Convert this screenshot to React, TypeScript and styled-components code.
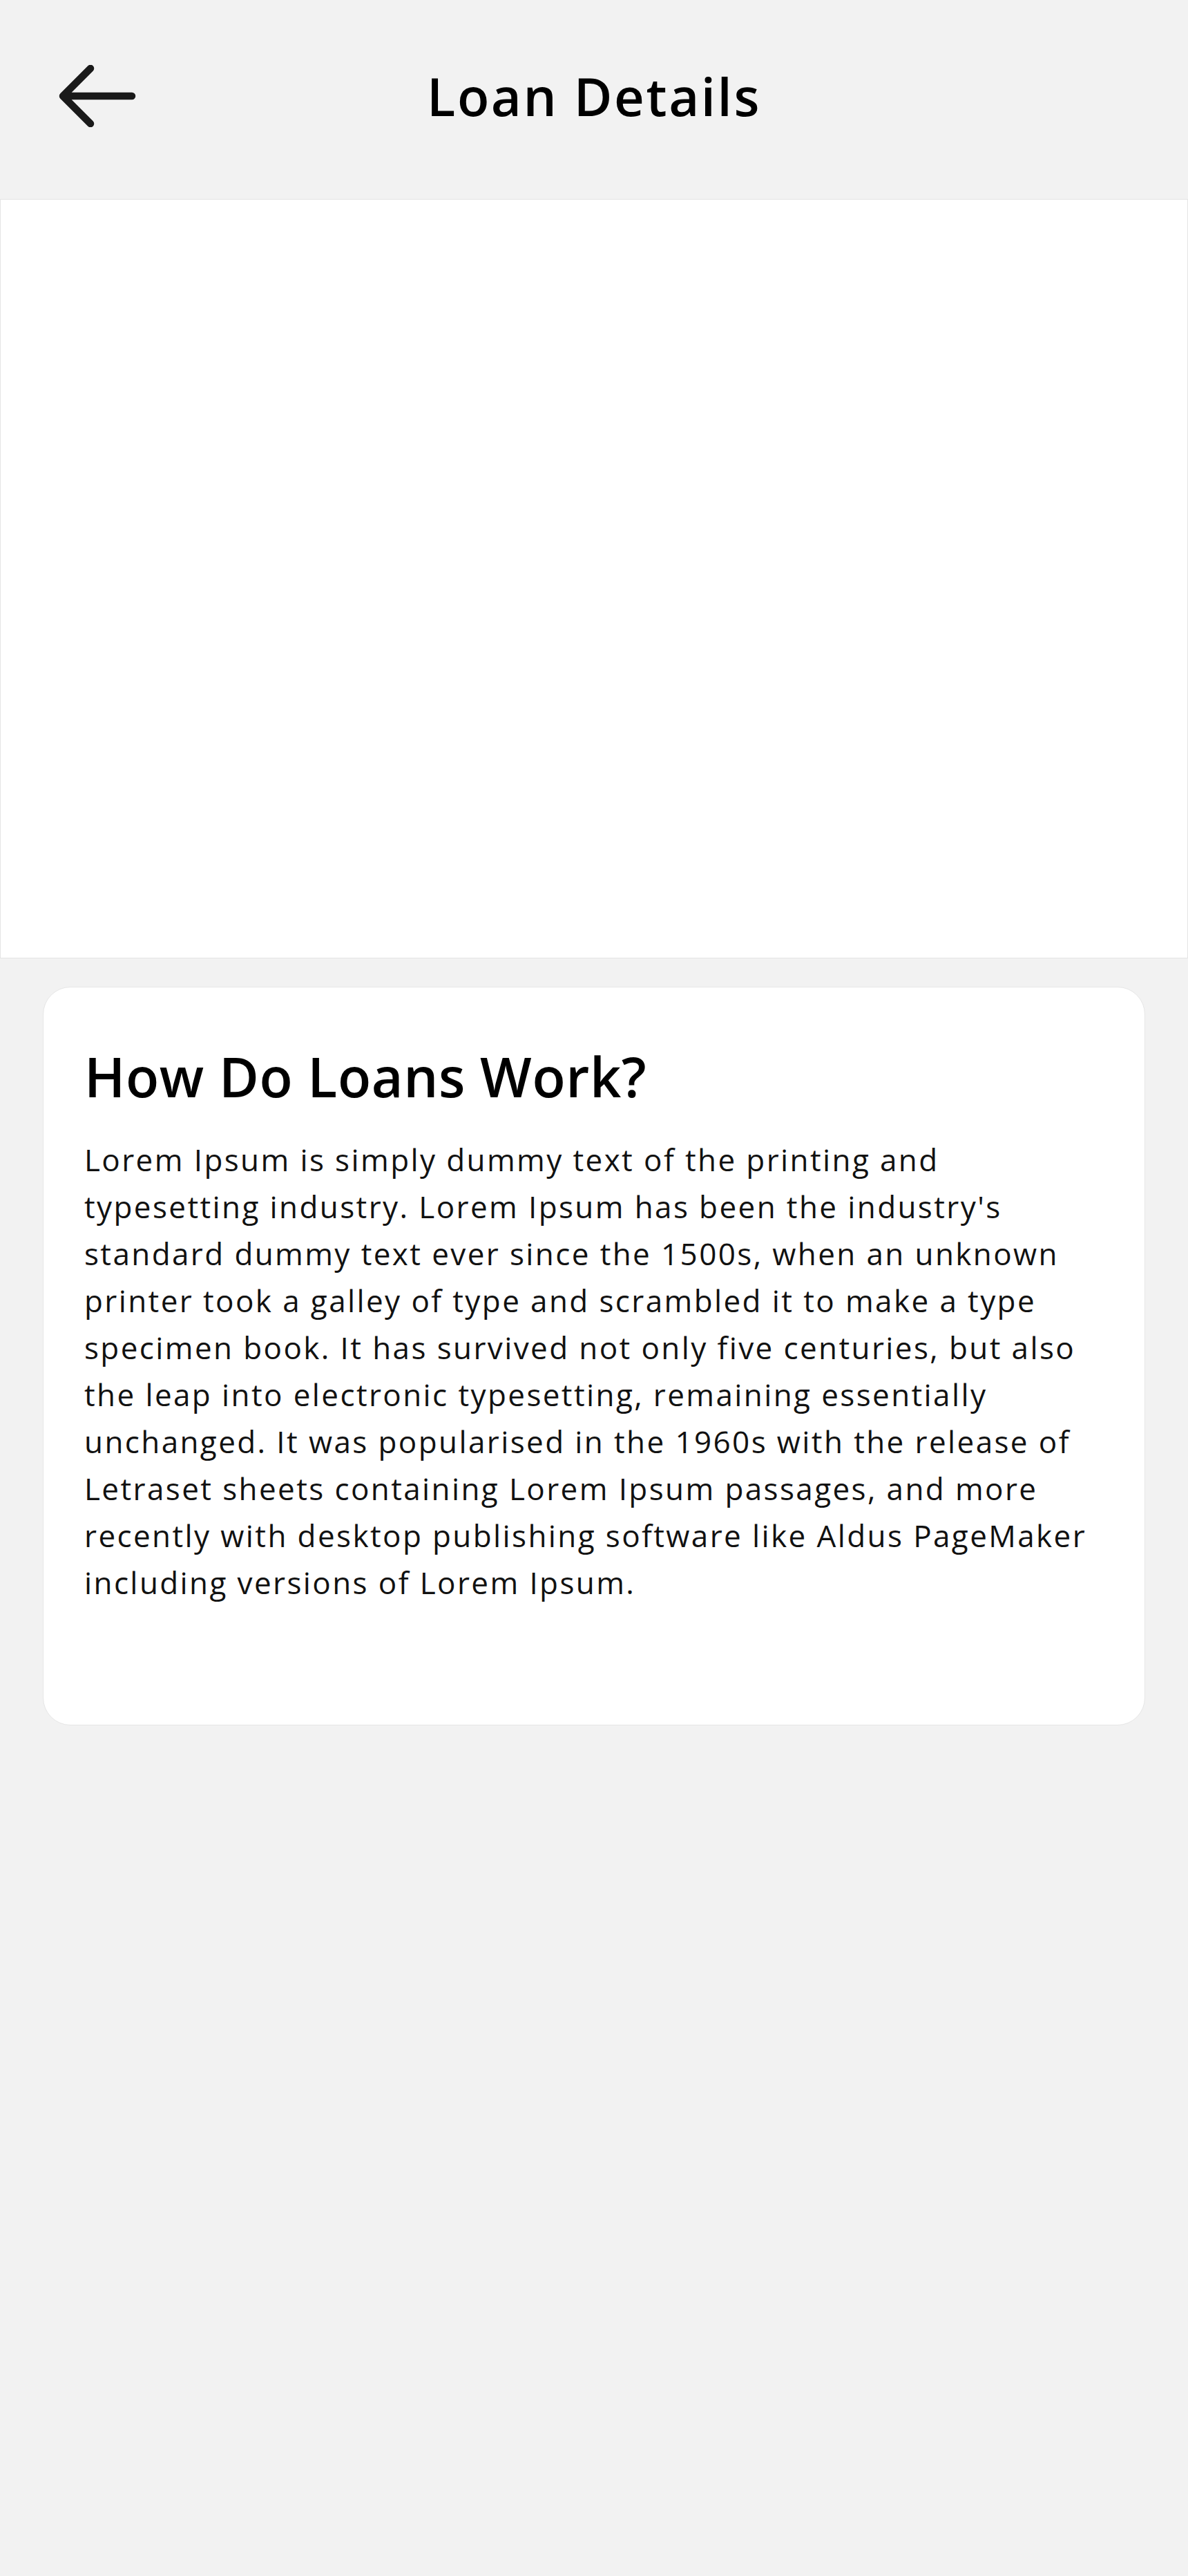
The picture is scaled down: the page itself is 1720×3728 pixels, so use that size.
import React from 'react';
import styled, { createGlobalStyle } from 'styled-components';

const GlobalStyle = createGlobalStyle`
  html, body {
    margin: 0;
    padding: 0;
    background: #f2f2f2;
  }
  body {
    font-family: 'Open Sans', 'Noto Sans', sans-serif;
    color: #000;
  }
`;

const Page = styled.div`
  width: 1720px;
  min-height: 3728px;
  background: #f2f2f2;
`;

const Header = styled.header`
  height: 288px;
  display: grid;
  grid-template-columns: 200px 1fr 200px;
  align-items: center;
  padding: 0 0 0 85px;
  box-sizing: border-box;
`;

const BackButton = styled.button`
  width: 120px;
  height: 90px;
  margin-top: -10px;
  padding: 0;
  border: none;
  background: transparent;
  display: flex;
  align-items: center;
  cursor: pointer;
`;

const Title = styled.h1`
  margin: -12px 0 0 -85px;
  text-align: center;
  font-size: 76px;
  font-weight: 600;
  letter-spacing: 2.6px;
  color: #000;
`;

const MediaPanel = styled.div`
  height: 1099px;
  background: #fff;
  border: 1px solid #e4e4e4;
  box-sizing: border-box;
`;

const InfoCard = styled.section`
  margin: 41px 62px 0 62px;
  padding: 82px 50px 172px 59px;
  background: #fff;
  border: 1px solid #e6e6e6;
  border-radius: 40px;
`;

const CardHeading = styled.h2`
  margin: 0 0 38px 0;
  font-size: 79px;
  font-weight: 600;
  line-height: 1.2;
  letter-spacing: 0.6px;
  color: #000;
`;

const CardBody = styled.p`
  margin: 0;
  font-size: 44px;
  font-weight: 400;
  line-height: 68px;
  letter-spacing: 2.4px;
  color: #111;
`;

const BackArrow = () => (
  <svg width="112" height="90" viewBox="0 0 112 90" fill="none">
    <path
      d="M6 45 H106 M46 5 L6 45 L46 85"
      stroke="#1a1a1a"
      strokeWidth="10.5"
      strokeLinecap="round"
      strokeLinejoin="round"
    />
  </svg>
);

const App = () => {
  return (
    <Page>
      <GlobalStyle />
      <Header>
        <BackButton aria-label="Back">
          <BackArrow />
        </BackButton>
        <Title>Loan Details</Title>
        <div />
      </Header>
      <MediaPanel />
      <InfoCard>
        <CardHeading>How Do Loans Work?</CardHeading>
        <CardBody>
          Lorem Ipsum is simply dummy text of the printing and typesetting industry. Lorem Ipsum has been the
          industry's standard dummy text ever since the 1500s, when an unknown printer took a galley of type and
          scrambled it to make a type specimen book. It has survived not only five centuries, but also the leap
          into electronic typesetting, remaining essentially unchanged. It was popularised in the 1960s with the
          release of Letraset sheets containing Lorem Ipsum passages, and more recently with desktop publishing
          software like Aldus PageMaker including versions of Lorem Ipsum.
        </CardBody>
      </InfoCard>
    </Page>
  );
};

export default App;
